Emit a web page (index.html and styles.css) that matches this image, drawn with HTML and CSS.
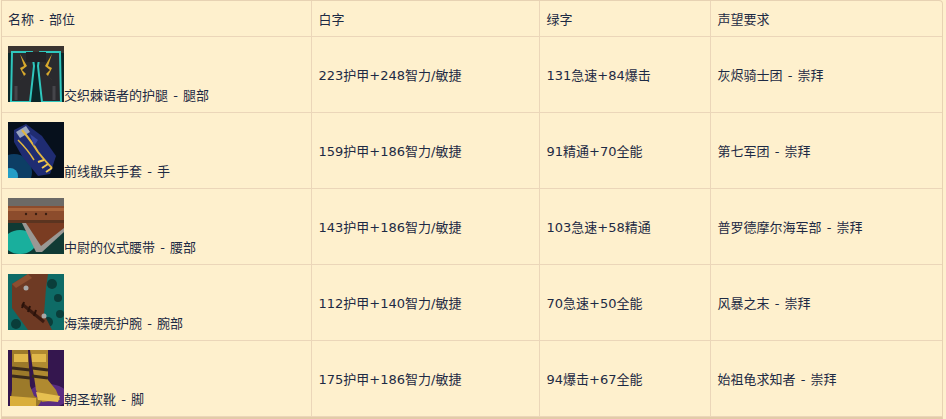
FILE: index.html
```html
<!DOCTYPE html>
<html lang="zh-CN">
<head>
<meta charset="utf-8">
<title>装备列表</title>
<link rel="stylesheet" href="styles.css">
</head>
<body>
<div class="wrap">
<table class="gear">
  <colgroup>
    <col class="c1"><col class="c2"><col class="c3"><col class="c4">
  </colgroup>
  <thead>
    <tr><th>名称 - 部位</th><th>白字</th><th>绿字</th><th>声望要求</th></tr>
  </thead>
  <tbody>
    <tr>
      <td class="name"><svg class="icon" viewBox="0 0 56 56" width="56" height="56">
        <rect width="56" height="56" fill="#0a2628"/>
        <rect x="0" y="0" width="56" height="7" fill="#3a3430"/>
        <path d="M4 6 L24 6 L26 20 L22 56 L3 56 Z" fill="#2a2a2e" stroke="#2fc6bd" stroke-width="2"/>
        <path d="M32 6 L52 6 L53 56 L34 56 L30 20 Z" fill="#2a2a2e" stroke="#2fc6bd" stroke-width="2"/>
        <rect x="18" y="6" width="20" height="10" fill="#232226"/>
        <path d="M12 8 L16 20 L12 22 L16 30 L12 34 L18 28 L14 24 L19 20 Z" fill="#d7a92c"/>
        <path d="M44 8 L40 20 L44 22 L40 30 L44 34 L38 28 L42 24 L37 20 Z" fill="#d7a92c"/>
        <path d="M8 40 L8 54" stroke="#45454a" stroke-width="3"/>
        <path d="M46 40 L46 54" stroke="#45454a" stroke-width="3"/>
      </svg>交织棘语者的护腿 - 腿部</td>
      <td>223护甲+248智力/敏捷</td>
      <td>131急速+84爆击</td>
      <td>灰烬骑士团 - 崇拜</td>
    </tr>
    <tr>
      <td class="name"><svg class="icon" viewBox="0 0 56 56" width="56" height="56">
        <rect width="56" height="56" fill="#06101c"/>
        <circle cx="6" cy="50" r="18" fill="#0f4a78" opacity="0.8"/>
        <circle cx="2" cy="54" r="8" fill="#2ab6e0" opacity="0.8"/>
        <path d="M6 8 L18 2 L34 14 L48 34 L42 52 L30 54 L14 34 L6 20 Z" fill="#1f2c72"/>
        <path d="M8 10 L18 4 L22 10 L12 16 Z" fill="#9aa6c0"/>
        <path d="M14 8 Q24 20 30 30 Q38 40 44 46" stroke="#e0b640" stroke-width="2" fill="none"/>
        <path d="M10 18 Q20 28 26 38" stroke="#e0b640" stroke-width="1.5" fill="none"/>
        <path d="M30 40 L36 38 M34 46 L40 42 M38 50 L44 46" stroke="#f0c850" stroke-width="2"/>
        <path d="M22 12 L30 18 L26 24 Z" fill="#3546a0"/>
      </svg>前线散兵手套 - 手</td>
      <td>159护甲+186智力/敏捷</td>
      <td>91精通+70全能</td>
      <td>第七军团 - 崇拜</td>
    </tr>
    <tr>
      <td class="name"><svg class="icon" viewBox="0 0 56 56" width="56" height="56">
        <rect width="56" height="56" fill="#103a34"/>
        <ellipse cx="12" cy="44" rx="16" ry="12" fill="#1bc4b0" opacity="0.85"/>
        <rect x="0" y="0" width="56" height="10" fill="#6c6a66"/>
        <rect x="0" y="8" width="56" height="16" fill="#8c4c2c"/>
        <rect x="0" y="10" width="56" height="3" fill="#a8653c"/>
        <rect x="0" y="22" width="56" height="3" fill="#5b3420"/>
        <circle cx="18" cy="16" r="1.2" fill="#3a1e12"/>
        <circle cx="28" cy="16" r="1.2" fill="#3a1e12"/>
        <circle cx="38" cy="16" r="1.2" fill="#3a1e12"/>
        <path d="M14 25 L56 25 L56 34 L34 54 L28 54 Z" fill="#9a9894"/>
        <path d="M18 25 L56 25 L56 30 L33 48 Z" fill="#7a3c22"/>
      </svg>中尉的仪式腰带 - 腰部</td>
      <td>143护甲+186智力/敏捷</td>
      <td>103急速+58精通</td>
      <td>普罗德摩尔海军部 - 崇拜</td>
    </tr>
    <tr>
      <td class="name"><svg class="icon" viewBox="0 0 56 56" width="56" height="56">
        <rect width="56" height="56" fill="#0e6b66"/>
        <circle cx="44" cy="10" r="5" fill="#0a3d3a"/>
        <circle cx="50" cy="24" r="4" fill="#0a3d3a"/>
        <circle cx="8" cy="50" r="5" fill="#0a3d3a"/>
        <circle cx="40" cy="48" r="5" fill="#0a3d3a"/>
        <circle cx="52" cy="40" r="4" fill="#0a3d3a"/>
        <path d="M4 10 L20 0 L40 0 L38 14 L36 40 L44 56 L20 56 L4 34 Z" fill="#6e3a24"/>
        <path d="M4 10 L20 0 L24 4 L8 14 Z" fill="#8c4e30"/>
        <path d="M14 30 L36 48" stroke="#3a1a10" stroke-width="3"/>
        <path d="M14 34 L16 28 M20 38 L22 32 M26 42 L28 36" stroke="#2a120a" stroke-width="2"/>
        <circle cx="18" cy="14" r="2.5" fill="#a8a8a8"/>
        <circle cx="36" cy="42" r="2.5" fill="#a8a8a8"/>
      </svg>海藻硬壳护腕 - 腕部</td>
      <td>112护甲+140智力/敏捷</td>
      <td>70急速+50全能</td>
      <td>风暴之末 - 崇拜</td>
    </tr>
    <tr>
      <td class="name"><svg class="icon" viewBox="0 0 56 56" width="56" height="56">
        <rect width="56" height="56" fill="#34164e"/>
        <ellipse cx="40" cy="46" rx="20" ry="12" fill="#5a2c82"/>
        <path d="M4 0 L20 0 L22 36 L26 46 L34 50 L30 56 L2 56 L4 40 Z" fill="#9c7a2a"/>
        <path d="M22 0 L40 0 L40 30 L48 40 L52 50 L34 52 L28 40 Z" fill="#b08a30"/>
        <path d="M6 4 L20 4 L20 12 L6 12 Z" fill="#e0b84a"/>
        <path d="M24 4 L38 4 L38 12 L24 12 Z" fill="#e0b84a"/>
        <path d="M4 18 L22 20 M4 26 L22 28 M24 18 L40 20 M24 26 L40 28" stroke="#3a2a1a" stroke-width="3"/>
        <path d="M28 42 L52 46 L50 52 L30 50 Z" fill="#e6c050"/>
        <path d="M2 46 L28 48 L28 56 L2 56 Z" fill="#d9ae3c"/>
      </svg>朝圣软靴 - 脚</td>
      <td>175护甲+186智力/敏捷</td>
      <td>94爆击+67全能</td>
      <td>始祖龟求知者 - 崇拜</td>
    </tr>
  </tbody>
</table>
</div>
</body>
</html>
```

FILE: styles.css
```css
html, body {
  margin: 0;
  padding: 0;
  background: #fef0cd;
}
body {
  font-family: "DejaVu Sans", "Noto Sans CJK SC", sans-serif;
  font-size: 13px;
  color: #1d2a44;
  word-spacing: 1px;
}
.wrap {
  width: 940px;
  margin-left: 1px;
  border: 1px solid #e7d2b3;
  border-bottom: 2px solid #e3cba8;
  border-radius: 0 4px 0 0;
  overflow: hidden;
}
.gear {
  width: 100%;
  border-collapse: collapse;
  table-layout: fixed;
}
.c1 { width: 309px; }
.c2 { width: 228px; }
.c3 { width: 171px; }
.c4 { width: 232px; }
.gear th,
.gear td {
  border: 1px solid #ebd6b9;
  padding: 0 7px;
  text-align: left;
  font-weight: normal;
  vertical-align: middle;
}
.gear tr > :first-child { border-left: none; padding-left: 6px; }
.gear tr > :last-child { border-right: none; }
.gear thead th { border-top: none; height: 35px; }
.gear tbody td { height: 75px; }
.gear tbody tr:last-child td { border-bottom: 1px solid #ebd6b9; }
.name { line-height: 16px; }
.icon {
  display: inline-block;
  vertical-align: baseline;
  margin-bottom: -2px;
}
```
